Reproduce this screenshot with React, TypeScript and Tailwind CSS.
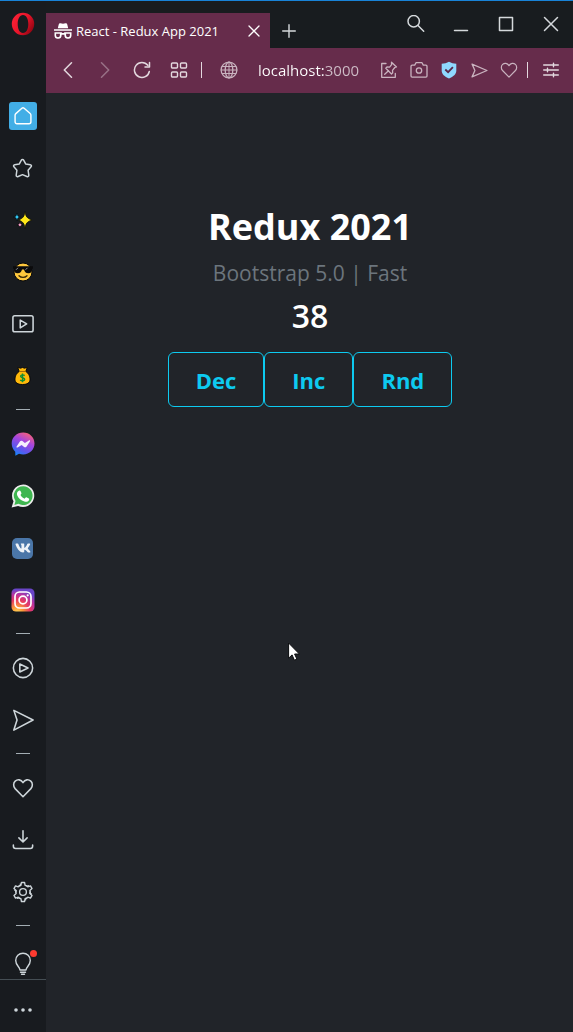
import { useState } from "react";
import type { ReactNode } from "react";
import { FaVk } from "react-icons/fa";

type IconProps = { size?: number; width?: number; box?: string; className?: string; children: ReactNode };

function Icon({ size = 22, width = 1.5, box = "0 0 24 24", className = "", children }: IconProps) {
  return (
    <svg
      width={size}
      height={size}
      viewBox={box}
      fill="none"
      stroke="currentColor"
      strokeWidth={width}
      strokeLinecap="round"
      strokeLinejoin="round"
      className={className}
      aria-hidden="true"
    >
      {children}
    </svg>
  );
}

const HEART = "M12 21.500 3.400 12.700C1.200 10.300 1.300 6.500 3.500 4.500 6 2.300 9.800 2.500 12 6.200 14.200 2.500 18 2.300 20.500 4.500c2.200 2 2.300 5.800.1 8.200Z";
const PLANE = "M2 1.500 23 12 2 23 5.500 12Z";

function OperaLogo() {
  return (
    <svg width="24" height="24" viewBox="0 0 24 24" aria-hidden="true">
      <defs>
        <linearGradient id="opera" x1="0" y1="0" x2="1" y2="0.6">
          <stop offset="0" stopColor="#ff2438" />
          <stop offset="0.6" stopColor="#e8142a" />
          <stop offset="1" stopColor="#9a0614" />
        </linearGradient>
      </defs>
      <path
        fill="url(#opera)"
        fillRule="evenodd"
        d="M12 .8a11.200 11.200 0 1 0 0 22.400 11.200 11.200 0 0 0 0-22.400Zm0 2.200c3.400 0 5.300 4 5.300 9s-1.900 9-5.300 9-5.300-4-5.300-9 1.900-9 5.300-9Z"
      />
    </svg>
  );
}

function Sparkles() {
  return (
    <svg width="20" height="20" viewBox="0 0 20 20" stroke="#08090a" strokeWidth="0.8" aria-hidden="true">
      <path fill="#ffe81a" d="M12 1.500c.8 5 1.800 6.700 7 8.500-5.200 1.800-6.200 3.500-7 8.500-.8-5-1.800-6.700-6.500-8.500C10.200 8.200 11.200 6.500 12 1.500Z" />
      <path fill="#32c8f4" d="M4 3c.4 2.500.9 3.500 3.400 4-2.500.6-3 1.500-3.400 4-.4-2.500-1-3.400-3.600-4C3 6.500 3.600 5.500 4 3Z" />
      <path fill="#f8a0c8" d="M7 11.500c.4 2 .8 2.800 3 3.300-2.200.5-2.600 1.300-3 3.400-.4-2.100-.9-2.900-3-3.400 2.100-.5 2.600-1.300 3-3.300Z" />
    </svg>
  );
}

function CoolFace() {
  return (
    <svg width="20" height="20" viewBox="0 0 20 20" aria-hidden="true">
      <circle cx="10" cy="10" r="9" fill="#ffc83d" stroke="#08090a" strokeWidth="1" />
      <path fill="#0b0b0c" d="M0 4.300h20v2.200l-1 .4c0 3.100-1 4.300-3.600 4.300-2.700 0-3.800-1.400-4.400-3.800H9c-.6 2.400-1.700 3.800-4.400 3.800C2 11.200 1 10 1 6.900l-1-.4Z" />
      <path stroke="#8b8f96" strokeWidth="1" d="m3 7.800 2-2M12.500 7.800l2-2" />
      <path fill="none" stroke="#3b2a08" strokeWidth="1.300" strokeLinecap="round" d="M6 13.700c2 2.200 6 2.200 8 0" />
    </svg>
  );
}

function MoneyBag() {
  return (
    <svg width="17" height="20" viewBox="0 0 18 20" aria-hidden="true">
      <path
        fill="#ffb90b"
        stroke="#08090a"
        strokeWidth="1"
        d="M4 1 7 1.700 9 1l2 .7L14 1l-1.500 4.200c3 1.800 4.500 5 4.500 8.100 0 3.900-3 5.700-8 5.700s-8-1.800-8-5.700c0-3.100 1.500-6.300 4.500-8.100Z"
      />
      <path stroke="#9b6509" strokeWidth="1" d="M5.500 5.200h7" />
      <path fill="none" stroke="#0d8f35" strokeWidth="1.500" d="M11.300 9.600C10 8.400 7 8.500 7 10.300c0 2 4.300 1.200 4.300 3.200 0 1.900-3.200 2-4.800.7M9 7.300v9.200" />
    </svg>
  );
}

function Messenger() {
  return (
    <svg width="24" height="24" viewBox="0 0 24 24" aria-hidden="true">
      <defs>
        <linearGradient id="messenger" x1="0.15" y1="1" x2="0.65" y2="0">
          <stop offset="0" stopColor="#0a8dfb" />
          <stop offset="0.3" stopColor="#5a58ee" />
          <stop offset="0.65" stopColor="#a445de" />
          <stop offset="1" stopColor="#f2607f" />
        </linearGradient>
      </defs>
      <path fill="url(#messenger)" d="M12.200.5C5.800.5.7 5.200.7 11.500c0 3.400 1.400 6.200 3.500 8.200l.2 4 3.600-1.900c1.300.4 2.700.6 4.200.6 6.300 0 11.300-4.600 11.300-10.900S18.500.5 12.200.5Z" />
      <path fill="#f6eefc" d="m5.600 14.500 3.300-5c.6-.9 1.700-1.100 2.500-.5l2.500 1.900 4-2.400c.8-.5 1.500.1 1 .9l-3.300 5c-.6.900-1.700 1.100-2.500.5l-2.500-1.900-4 2.400c-.8.500-1.500-.1-1-.9Z" />
    </svg>
  );
}

function WhatsApp() {
  return (
    <svg width="24" height="24" viewBox="0 0 24 24" aria-hidden="true">
      <path fill="#ececec" d="M12.300.4A11.300 11.300 0 0 0 2.500 17.300L.6 23.600l6.500-1.700A11.300 11.300 0 1 0 12.300.4Z" />
      <path fill="#3fb650" d="M12.300 2.300A9.400 9.400 0 0 0 4.500 17l-1.100 3.900 4-1.100a9.400 9.400 0 1 0 4.900-17.500Z" />
      <path
        fill="#fff"
        d="M8.300 6.500c.5-.2 1-.1 1.200.5l.9 2.100c.2.500-.1.900-.9 1.800 1 1.800 2.200 2.900 4.200 3.800.8-1 1.200-1.600 1.700-1.400l2.500 1.200c.4.200.4 1-.1 1.900-.8 1.300-2.600 1.700-4.400 1.100-3.600-1.200-5.600-3.100-7-5.800-1-2-.5-4.200 1.900-5.200Z"
      />
    </svg>
  );
}

function VkLogo() {
  return (
    <span className="flex size-[21px] items-center justify-center rounded-[5px] bg-[#4a76a8] text-[#eef3f8]">
      <FaVk size={16} aria-hidden="true" />
    </span>
  );
}

function Instagram() {
  return (
    <svg width="24" height="24" viewBox="0 0 24 24" aria-hidden="true">
      <defs>
        <radialGradient id="insta-warm" cx="0.25" cy="1.050" r="1">
          <stop offset="0" stopColor="#ffd95c" />
          <stop offset="0.25" stopColor="#fb9a38" />
          <stop offset="0.55" stopColor="#e83a60" />
          <stop offset="0.8" stopColor="#b832a2" />
          <stop offset="1" stopColor="#6a45c8" />
        </radialGradient>
      </defs>
      <rect x=".5" y=".5" width="23" height="23" rx="4.500" fill="url(#insta-warm)" />
      <g fill="none" stroke="#fff" strokeWidth="1.700">
        <rect x="4" y="4" width="16" height="16" rx="4.500" />
        <circle cx="12" cy="12" r="3.900" />
      </g>
      <circle cx="16.700" cy="7.300" r="1.100" fill="#fff" />
    </svg>
  );
}

function Gear() {
  const teeth = [0, 60, 120, 180, 240, 300];
  return (
    <Icon size={22} width={1.5}>
      <circle cx="12" cy="12" r="3.700" />
      {teeth.map((angle) => (
        <path
          key={angle}
          transform={`rotate(${angle} 12 12)`}
          d="M8.100 5.200 9.700 4.700 10.300 1.600h3.400l.6 3.100 1.600.5 M15.900 5.200c.8.800 1.200 1 2 0"
        />
      ))}
    </Icon>
  );
}

function SideItem({ label, children, className = "h-13 items-center" }: { label: string; children: ReactNode; className?: string }) {
  return (
    <button type="button" aria-label={label} className={`flex w-full shrink-0 justify-center pr-px ${className}`}>
      {children}
    </button>
  );
}

function Divider() {
  return (
    <div className="flex h-4 shrink-0 items-start justify-center pt-[7px]">
      <span className="h-px w-3.5 bg-[#a3adb3]" />
    </div>
  );
}

function Sidebar() {
  return (
    <nav aria-label="Sidebar" className="flex w-[46px] shrink-0 flex-col bg-[#181b1f] text-[#ced6da]">
      <SideItem label="Opera menu" className="mb-11 h-[45px] items-center">
        <OperaLogo />
      </SideItem>
      <SideItem label="Start page">
        <span className="flex size-7 items-center justify-center rounded-[3px] bg-[#42aee6] text-white">
          <Icon size={20} width={1.7}>
            <path d="M2.500 11c0-.8.300-1.400.9-1.900L11 2.500c.7-.5 1.300-.5 2 0l7.600 6.600c.6.500.9 1.100.9 1.900v8c0 1.300-1 2.300-2.300 2.300H4.800c-1.300 0-2.300-1-2.300-2.300Z" />
          </Icon>
        </span>
      </SideItem>
      <SideItem label="Bookmarks">
        <Icon size={21} width={1.7}>
          <path d="M10.700 2.400c.5-1 2.100-1 2.600 0l2.300 4.400 5.300.8c1.300.2 1.800 1.500.9 2.500l-3.400 3.900.8 5.600c.2 1.300-1 2.200-2.200 1.600L12 19l-5 2.200c-1.200.6-2.400-.3-2.200-1.600l.8-5.600-3.400-3.900c-.9-1-.4-2.300.9-2.500l5.300-.8Z" />
        </Icon>
      </SideItem>
      <SideItem label="Sparkles workspace"><Sparkles /></SideItem>
      <SideItem label="Cool workspace"><CoolFace /></SideItem>
      <SideItem label="Video workspace">
        <Icon size={22} width={1.7}>
          <rect x="1" y="3" width="22" height="17.500" rx="2" />
          <path d="m9 7.700 7 4.200-7 4.300Z" />
        </Icon>
      </SideItem>
      <SideItem label="Money workspace"><MoneyBag /></SideItem>
      <Divider />
      <SideItem label="Messenger"><Messenger /></SideItem>
      <SideItem label="WhatsApp"><WhatsApp /></SideItem>
      <SideItem label="VK"><VkLogo /></SideItem>
      <SideItem label="Instagram"><Instagram /></SideItem>
      <Divider />
      <SideItem label="Player">
        <Icon size={22} width={1.7}>
          <circle cx="12" cy="12" r="10.500" />
          <path d="m8.500 7.700 9 4.300-9 4.300Z" />
        </Icon>
      </SideItem>
      <SideItem label="My Flow"><Icon width={1.7}><path d={PLANE} /></Icon></SideItem>
      <Divider />
      <SideItem label="Favourites"><Icon width={1.7}><path d={HEART} /></Icon></SideItem>
      <SideItem label="Downloads">
        <Icon width={1.7}>
          <path d="M12 2v12M7.500 9.700l4.500 4.500 4.500-4.500M1.500 17.500v1.300c0 1.600.8 2.400 2.400 2.400h16.200c1.600 0 2.400-.8 2.400-2.400v-1.300" />
        </Icon>
      </SideItem>
      <SideItem label="Settings"><Gear /></SideItem>
      <Divider />
      <SideItem label="Tips" className="h-11 items-end pb-0.5">
        <span className="relative">
          <Icon size={24} width={1.4}>
            <path d="M9 18c0-3-4.300-4.600-4.300-9.500a7.300 7.300 0 0 1 14.600 0C19.300 13.400 15 15 15 18Z" />
            <path d="M9.500 20.200h5M10.500 22.300h3" />
          </Icon>
          <span className="absolute -top-0.5 -right-0.5 size-[7px] rounded-full bg-[#ff3b30]" />
        </span>
      </SideItem>
      <SideItem label="Sidebar setup" className="mt-auto h-[53px] items-center border-t border-[#454e54] pt-2">
        <svg width="18" height="4" viewBox="0 0 18 4" fill="currentColor" aria-hidden="true">
          <circle cx="2" cy="2" r="1.800" />
          <circle cx="9" cy="2" r="1.800" />
          <circle cx="16" cy="2" r="1.800" />
        </svg>
      </SideItem>
    </nav>
  );
}

function TabStrip() {
  const control = "flex h-full w-[45px] items-center justify-center pb-px";
  return (
    <div className="flex h-[47px] items-end bg-[#181c1f] text-[#d5d9dc]">
      <div className="flex h-[35px] w-56 items-center bg-[#662c4b] pl-2 text-white">
        <svg width="18" height="16" viewBox="0 0 18 16" fill="currentColor" className="shrink-0" aria-hidden="true">
          <path d="M4.800 1.300C5 .5 5.700 0 6.500.2L9 .8l2.500-.6c.8-.2 1.500.3 1.700 1.100l1 4H3.800ZM0 6.200h18v1.600H0Z" />
          <path fillRule="evenodd" d="M.5 9.300h7.200l.3.700h2l.3-.7h7.200v3.200c0 2-1.200 3.300-3.200 3.300h-.6c-2 0-3.300-1.300-3.300-3.300v-.8H7.600v.8c0 2-1.300 3.300-3.300 3.300h-.6c-2 0-3.200-1.300-3.200-3.300Zm1.600 1.500v1.500c0 1.300.7 2 1.900 2s1.900-.7 1.900-2v-1.500Zm10 0v1.500c0 1.300.7 2 1.900 2s1.900-.7 1.900-2v-1.500Z" />
        </svg>
        <span className="ml-1 flex-1 truncate text-[13px] leading-5">React - Redux App 2021</span>
        <button type="button" aria-label="Close tab" className="flex h-full w-8 items-center justify-center">
          <Icon size={12} width={1.3} box="0 0 12 12"><path d="m1 1 10 10M11 1 1 11" /></Icon>
        </button>
      </div>
      <button type="button" aria-label="New tab" className="flex h-[35px] w-[38px] items-center justify-center">
        <Icon size={14} width={1.4} box="0 0 14 14"><path d="M7 .7v12.600M.7 7h12.600" /></Icon>
      </button>
      <div className="ml-auto flex h-full">
        <button type="button" aria-label="Search tabs" className={control}>
          <Icon size={18} width={1.5} box="0 0 18 18"><circle cx="6.700" cy="6.200" r="5.700" /><path d="m11 10.500 5.700 5.700" /></Icon>
        </button>
        <button type="button" aria-label="Minimize" className={control}>
          <Icon size={16} width={1.5} box="0 0 16 16"><path d="M1.500 14.500h13" /></Icon>
        </button>
        <button type="button" aria-label="Maximize" className={control}>
          <Icon size={16} width={1.5} box="0 0 16 16"><path d="M1.500 1.500h13v13h-13Z" /></Icon>
        </button>
        <button type="button" aria-label="Close window" className={control}>
          <Icon size={16} width={1.5} box="0 0 16 16"><path d="m1.500 1.500 13 13M14.500 1.500l-13 13" /></Icon>
        </button>
      </div>
    </div>
  );
}

function AddressBar() {
  const nav = "flex h-full w-[37px] shrink-0 items-center justify-center";
  const tool = "flex h-full w-[30px] shrink-0 items-center justify-center text-[#c9b3bf]";
  return (
    <div className="flex h-[45px] items-center bg-[#662c4b] pb-px pl-[3px] text-[#e3d8de]">
      <button type="button" aria-label="Back" className={nav}>
        <Icon size={16} width={1.5} box="0 0 16 16"><path d="M11.500.8 4.300 8l7.200 7.200" /></Icon>
      </button>
      <button type="button" aria-label="Forward" className={`${nav} opacity-40`}>
        <Icon size={16} width={1.5} box="0 0 16 16"><path d="M4.500.8 11.700 8l-7.200 7.200" /></Icon>
      </button>
      <button type="button" aria-label="Reload" className={nav}>
        <Icon size={18} width={1.5} box="0 0 18 18"><path d="M16.300 10.500A7.500 7.500 0 1 1 14.800 4.300M16.500 1.500v4.500h-4.500" /></Icon>
      </button>
      <button type="button" aria-label="Speed dial" className={nav}>
        <Icon size={18} width={1.4} box="0 0 18 18">
          <rect x="1.500" y="2" width="6" height="5" rx="1" />
          <rect x="10.500" y="2" width="6" height="5" rx="1" />
          <rect x="1.500" y="11" width="6" height="5" rx="1" />
          <rect x="10.500" y="11" width="6" height="5" rx="1" />
        </Icon>
      </button>
      <span className="ml-1 h-4 w-px shrink-0 bg-[#e3d8de]" />
      <button type="button" aria-label="Site information" className="ml-[18px] shrink-0 text-[#c9b3bf]">
        <Icon size={18} width={1.3} box="0 0 18 18">
          <circle cx="9" cy="9" r="7.900" />
          <ellipse cx="9" cy="9" rx="3.800" ry="7.900" />
          <path d="M9 1.100v15.800M2.200 5.500h13.600M1.200 9h15.600M2.200 12.500h13.600" strokeWidth="1" />
        </Icon>
      </button>
      <input
        type="text"
        aria-label="Address"
        defaultValue="localhost:3000"
        spellCheck={false}
        className="ml-5 min-w-0 flex-1 bg-[linear-gradient(90deg,#ffffff_67px,#cfbec8_67px)] bg-clip-text text-[15px] leading-5 text-transparent caret-white outline-none"
      />
      <button type="button" aria-label="Edit page link" className={tool}>
        <Icon size={18} width={1.3} box="0 0 18 18">
          <path d="M6 2.500H1.700v13.800h13.600V12.500" />
          <path d="m11.500 1.200 5 4.800-1.700.5-2.300 2.800.2 2.500-1.200 1.200-5.700-5.700L7 6l2.600.1 2-2.500ZM8.500 9.700 4.700 13.300" />
        </Icon>
      </button>
      <button type="button" aria-label="Snapshot" className={tool}>
        <Icon size={18} width={1.3} box="0 0 18 18">
          <path d="M1 5.200c0-.7.400-1.100 1.100-1.100h2.600L6 1.700h6l1.300 2.400h2.600c.7 0 1.100.4 1.100 1.100v9.900c0 .7-.4 1.100-1.100 1.100H2.100c-.7 0-1.100-.4-1.100-1.100Z" />
          <circle cx="9" cy="9.500" r="2.700" />
        </Icon>
      </button>
      <button type="button" aria-label="Ad blocker" className={tool}>
        <svg width="16" height="18" viewBox="0 0 16 18" aria-hidden="true">
          <path fill="#8fd8ff" d="M8 .7c2.300 1.300 4.600 1.900 7.300 2v7.100c0 3.400-2.800 5.700-7.300 7.700C3.500 15.500.7 13.200.7 9.800V2.700C3.400 2.600 5.700 2 8 .7Z" />
          <path fill="none" stroke="#57284a" strokeWidth="1.800" d="m4.300 8.500 2.800 2.700 4.800-5" />
        </svg>
      </button>
      <button type="button" aria-label="Send to My Flow" className={tool}>
        <Icon size={17} width={1.8}><path d="M1.500 3 22.500 12 1.500 21 5.500 12Z" /></Icon>
      </button>
      <button type="button" aria-label="Add to bookmarks" className={tool}>
        <Icon size={18} width={1.6}><path d={HEART} /></Icon>
      </button>
      <span className="ml-[3px] h-4 w-px shrink-0 bg-[#e3d8de]" />
      <button type="button" aria-label="Easy setup" className="flex h-full w-[45px] shrink-0 items-center justify-center">
        <Icon size={16} width={1.4} box="0 0 16 16">
          <path d="M.7 3h14.600M.7 8h14.600M.7 13h14.600M10.500 1.200v3.600M4.500 6.200v3.600M10.500 11.200v3.600" />
        </Icon>
      </button>
    </div>
  );
}

function Counter() {
  const [count, setCount] = useState(38);
  const actions = [
    { label: "Dec", run: () => setCount((n) => n - 1) },
    { label: "Inc", run: () => setCount((n) => n + 1) },
    { label: "Rnd", run: () => setCount(Math.floor(Math.random() * 100)) },
  ];
  return (
    <main className="relative flex-1 bg-[#212429] pt-[110px] pl-px text-center text-white">
      <h1 className="text-[36px] leading-12 font-bold">Redux 2021</h1>
      <p className="mt-1.5 text-[21px] leading-8 text-[#6c757d]">Bootstrap 5.0 | Fast</p>
      <p className="mt-[3px] text-[32px] leading-12 font-semibold">{count}</p>
      <div className="mt-3 flex justify-center">
        {actions.map((action) => (
          <button
            key={action.label}
            type="button"
            onClick={action.run}
            className="h-[55px] rounded-md border border-[#0dcaf0] px-[27px] text-[22px] leading-8 font-bold text-[#0dcaf0]"
          >
            {action.label}
          </button>
        ))}
      </div>
      <svg width="12" height="19" viewBox="0 0 12 19" className="absolute top-[549px] left-[242px]" aria-hidden="true">
        <path fill="#fff" stroke="#0b0c0e" strokeWidth="1" d="M.6 1v15.200l3.500-3.300 2.300 5.300 2.500-1.100-2.300-5.100h4.800Z" />
      </svg>
    </main>
  );
}

export default function App() {
  return (
    <div className="flex min-h-screen flex-col border-t border-[#1883d7] bg-[#212429] font-['Open_Sans','Segoe_UI',sans-serif]">
      <div className="flex flex-1">
        <Sidebar />
        <div className="flex min-w-0 flex-1 flex-col">
          <TabStrip />
          <AddressBar />
          <Counter />
        </div>
      </div>
    </div>
  );
}
